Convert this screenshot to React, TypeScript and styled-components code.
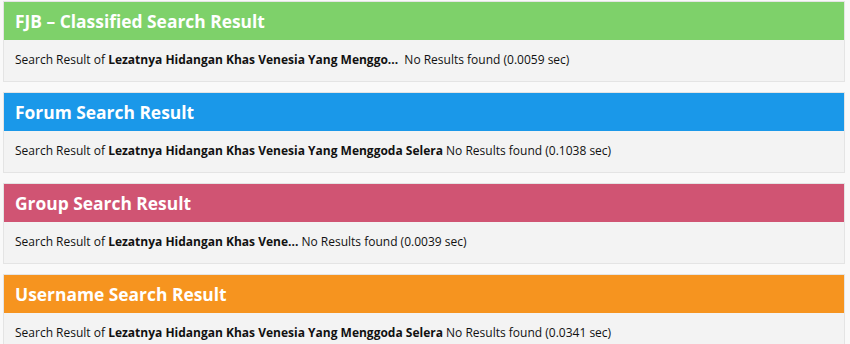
import React from "react";
import styled, { createGlobalStyle } from "styled-components";

const Global = createGlobalStyle`
  html, body { margin: 0; padding: 0; background: #f9f9f9; }
  body { font-family: "Open Sans", "Noto Sans", sans-serif; }
`;

const Page = styled.div`
  padding: 1px 5px 0 3px;
  display: flex;
  flex-direction: column;
  gap: 10.5px;
`;

const Card = styled.section`
  border: 1px solid #e4e4e4;
  background: #f3f3f3;
`;

const Header = styled.h2<{ $bg: string }>`
  margin: 0;
  height: 38px;
  line-height: 38px;
  padding: 0 11px;
  background: ${(p) => p.$bg};
  color: #fff;
  font-size: 17.4px;
  font-weight: 700;
`;

const Body = styled.div`
  height: 40.5px;
  line-height: 40.5px;
  padding: 0 11px;
  font-size: 12px;
  color: #111;
  white-space: pre;
`;

const Query = styled.b`
  font-weight: 700;
`;

const items = [
  { title: "FJB – Classified Search Result", bg: "#7ed16a", q: "Lezatnya Hidangan Khas Venesia Yang Menggo...", sep: "  ", t: "0.0059" },
  { title: "Forum Search Result", bg: "#1a98e9", q: "Lezatnya Hidangan Khas Venesia Yang Menggoda Selera", sep: " ", t: "0.1038" },
  { title: "Group Search Result", bg: "#d05473", q: "Lezatnya Hidangan Khas Vene...", sep: " ", t: "0.0039" },
  { title: "Username Search Result", bg: "#f6941f", q: "Lezatnya Hidangan Khas Venesia Yang Menggoda Selera", sep: " ", t: "0.0341" },
];

export default function App() {
  return (
    <>
      <Global />
      <Page>
        {items.map((it) => (
          <Card key={it.title}>
            <Header $bg={it.bg}>{it.title}</Header>
            <Body>
              Search Result of <Query>{it.q}</Query>
              {it.sep}No Results found ({it.t} sec)
            </Body>
          </Card>
        ))}
      </Page>
    </>
  );
}
